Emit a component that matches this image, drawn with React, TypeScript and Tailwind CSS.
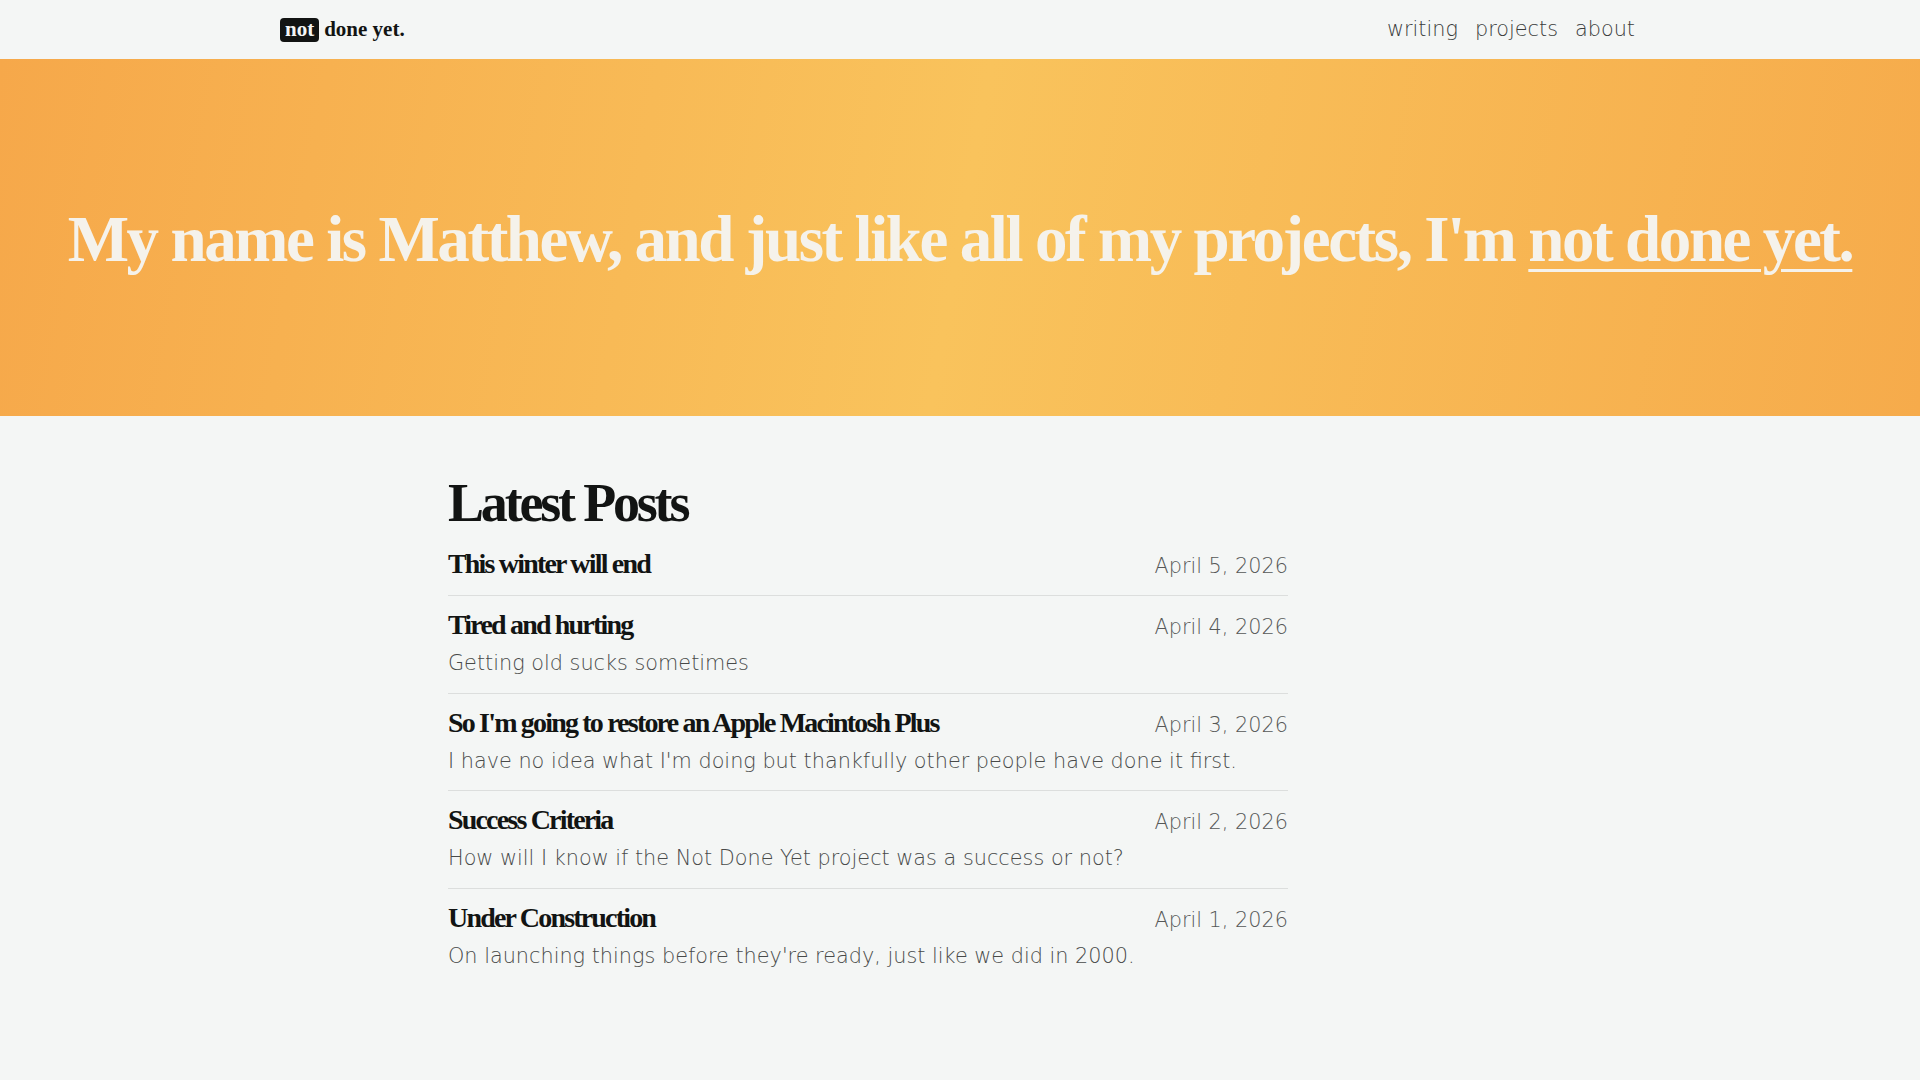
import React from "react";

const posts = [
  { title: "This winter will end", date: "April 5, 2026", desc: "" },
  { title: "Tired and hurting", date: "April 4, 2026", desc: "Getting old sucks sometimes" },
  {
    title: "So I'm going to restore an Apple Macintosh Plus",
    date: "April 3, 2026",
    desc: "I have no idea what I'm doing but thankfully other people have done it first.",
  },
  {
    title: "Success Criteria",
    date: "April 2, 2026",
    desc: "How will I know if the Not Done Yet project was a success or not?",
  },
  {
    title: "Under Construction",
    date: "April 1, 2026",
    desc: "On launching things before they're ready, just like we did in 2000.",
  },
];

const serif = "font-['Liberation_Serif','Times_New_Roman',serif]";
const sans = "font-['DejaVu_Sans','Verdana',sans-serif] font-extralight";

export default function App() {
  return (
    <div className="min-h-[1080px] bg-[#f4f6f5] text-[#121413]">
      <header className="h-[59px]">
        <div className="mx-auto flex h-full max-w-[1360px] items-center justify-between">
          <a href="#" className={`${serif} flex items-center text-[21px] font-bold text-[#121413]`}>
            <span className="flex h-[24px] items-center rounded-[4px] bg-[#121413] px-[5px] text-[#f4f6f5]">not</span>
            <span className="ml-[5px]">done yet.</span>
          </a>
          <nav className={`${sans} mr-[5px] flex items-center gap-[17px] text-[20.8px] text-[#3a3c3b]`}>
            <a href="#">writing</a>
            <a href="#">projects</a>
            <a href="#">about</a>
          </nav>
        </div>
      </header>

      <section className="flex h-[357px] items-center justify-center bg-[linear-gradient(100deg,#f6a84a_0%,#f9c35c_50%,#f6ab4b_100%)]">
        <h1 className={`${serif} mt-[4px] text-[65px] font-bold leading-none tracking-[-0.0375em] text-[#f5f2eb]`}>
          My name is Matthew, and just like all of my projects, I'm{" "}
          <a href="#" className="underline decoration-[3px] underline-offset-[8px]">
            not done yet.
          </a>
        </h1>
      </section>

      <main className="mx-auto max-w-[1024px] pt-[60px]">
        <div className="w-[840px]">
          <h2 className={`${serif} text-[54px] font-bold leading-none tracking-[-0.059em] text-[#121413]`}>
            Latest Posts
          </h2>
          <ul className="mt-[5px]">
            {posts.map((p, i) => (
              <li
                key={p.title}
                className={`pt-[11px] ${i === 0 ? "pb-[14px]" : "pb-[14px]"} ${i < posts.length - 1 ? "border-b border-[#dcdedd]" : ""}`}
              >
                <div className="flex items-baseline justify-between">
                  <a href="#" className={`${serif} text-[28px] font-bold leading-[35px] tracking-[-0.065em] text-[#121413]`}>
                    {p.title}
                  </a>
                  <span className={`${sans} text-[20.8px] leading-none text-[#565857]`}>{p.date}</span>
                </div>
                {p.desc && (
                  <p className={`${sans} mt-[6px] text-[20.8px] leading-[30.5px] text-[#484a49]`}>{p.desc}</p>
                )}
              </li>
            ))}
          </ul>
        </div>
      </main>
    </div>
  );
}
